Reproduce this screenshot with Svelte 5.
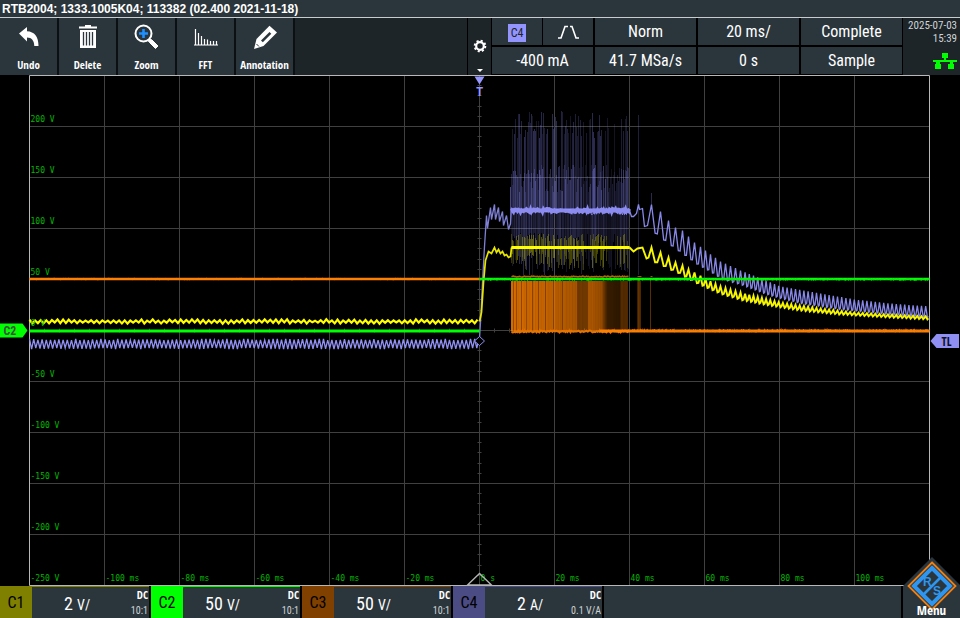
<script lang="ts">
	type Point = [number, number];

	type Channel = {
		id: string;
		scale: string;
		unit: string;
		coupling: string;
		probe: string;
	};

	const tools = ['Undo', 'Delete', 'Zoom', 'FFT', 'Annotation'];

	const channels: Channel[] = [
		{ id: 'C1', scale: '2', unit: 'V/', coupling: 'DC', probe: '10:1' },
		{ id: 'C2', scale: '50', unit: 'V/', coupling: 'DC', probe: '10:1' },
		{ id: 'C3', scale: '50', unit: 'V/', coupling: 'DC', probe: '10:1' },
		{ id: 'C4', scale: '2', unit: 'A/', coupling: 'DC', probe: '0.1 V/A' }
	];

	// The graticule is 12 x 10 divisions with the trigger point at the origin.
	const DIV_X = 75;
	const DIV_Y = 51;
	const LEFT = -450;
	const RIGHT = 450;
	const TOP = -255;
	const BOTTOM = 255;

	const columns = [-5, -4, -3, -2, -1, 1, 2, 3, 4, 5];
	const rows = [-4, -3, -2, -1, 0, 1, 2, 3, 4];
	const voltLabels = [200, 150, 100, 50, 0, -50, -100, -150, -200, -250];
	const timeLabels = [-100, -80, -60, -40, -20, 0, 20, 40, 60, 80, 100];

	const ticksX = Array.from({ length: 59 }, (_, i) => LEFT + (i + 1) * 15);
	const ticksY = Array.from({ length: 49 }, (_, i) => Math.round(TOP + (i + 1) * 10.2));

	let seed = 7;
	function random(): number {
		seed = (seed * 16807) % 2147483647;
		return seed / 2147483647;
	}

	function toPath(points: Point[]): string {
		return 'M' + points.map(([x, y]) => `${x.toFixed(1)} ${y.toFixed(1)}`).join('L');
	}

	function lerp(table: Point[], x: number): number {
		for (let i = 1; i < table.length; i++) {
			const [x0, y0] = table[i - 1];
			const [x1, y1] = table[i];
			if (x <= x1) return y0 + ((y1 - y0) * (x - x0)) / (x1 - x0);
		}
		return table[table.length - 1][1];
	}

	function ripple(from: number, to: number, period: number, low: number, high: number): Point[] {
		const points: Point[] = [];
		let up = true;
		for (let x = from; x <= to; x += period / 2) {
			points.push([x, (up ? high : low) + random() * 1.4 - 0.7]);
			up = !up;
		}
		return points;
	}

	function noise(from: number, to: number, y: number, spread: number): Point[] {
		const points: Point[] = [];
		for (let x = from; x <= to; x += 1) {
			points.push([x, y + (random() - 0.5) * spread]);
		}
		return points;
	}

	const peakTimes = [172, 181, 189, 196, 203, 209, 215, 221, 226, 231, 236, 241, 246, 251, 256, 261];
	for (let t = 265.6; t < RIGHT + 4; t += 4.2) peakTimes.push(t);

	const blueHigh: Point[] = [
		[172, -126], [181, -119], [189, -110], [196, -103], [203, -100], [209, -94],
		[215, -88], [226, -80], [241, -69], [261, -60], [301, -44], [341, -37],
		[375, -31], [410, -27], [450, -24]
	];
	const blueLow: Point[] = [
		[176, -97], [185, -90], [193, -84], [200, -79], [207, -74], [218, -66],
		[229, -60], [243, -51], [264, -45], [290, -35], [321, -27], [360, -21],
		[410, -16], [450, -13]
	];
	const yellowHigh: Point[] = [
		[172, -83], [181, -78], [189, -73], [196, -68], [203, -65], [209, -61],
		[215, -58], [226, -52], [241, -44], [261, -38], [301, -28], [341, -22],
		[375, -18], [410, -16], [450, -14]
	];
	const yellowLow: Point[] = [
		[176, -68], [185, -64], [193, -60], [200, -57], [207, -53], [218, -47],
		[229, -42], [243, -36], [264, -30], [290, -25], [321, -20], [360, -16],
		[410, -13], [450, -11]
	];

	function decay(high: Point[], low: Point[]): Point[] {
		const points: Point[] = [];
		for (let i = 0; i < peakTimes.length - 1; i++) {
			const x = peakTimes[i];
			const gap = peakTimes[i + 1] - x;
			points.push([x, lerp(high, x)]);
			points.push([x + gap * 0.4, lerp(low, x + gap * 0.4)]);
			points.push([x + gap * 0.65, lerp(low, x + gap * 0.65) - 1]);
		}
		return points.filter(([x]) => x <= RIGHT);
	}

	const blueBefore = toPath(ripple(LEFT, 0, 4.2, 18, 9));
	const blueRise = toPath([
		[0, 8], [1, -8], [3, -48], [5, -84], [7, -115], [8, -102], [11, -123], [12, -111],
		[15, -126], [16, -111], [19, -123], [20, -109], [23, -119], [24, -105], [27, -115],
		[29, -101], [31, -107], [32, -123]
	]);
	const blueFall = toPath([
		[150, -120], [152, -114], [154, -114], [157, -117], [159, -126], [160, -121], [163, -122],
		[165, -104], [168, -105], ...decay(blueHigh, blueLow)
	]);
	const blueTop = toPath(noise(32, 150, -120, 4));

	const yellowBefore = toPath(ripple(LEFT, 0, 5.6, -7.5, -10.5));
	const yellowRise = toPath([
		[0, -9], [2, -18], [4, -48], [6, -70], [9, -79], [12, -77], [15, -83], [17, -78],
		[19, -81], [21, -77], [23, -79], [25, -75], [27, -76], [29, -73], [31, -74], [32, -83]
	]);
	const yellowTop = toPath(noise(32, 150, -83, 1));
	const yellowFall = toPath([
		[150, -83], [154, -79], [158, -82], [163, -83], [167, -72], [169, -73],
		...decay(yellowHigh, yellowLow)
	]);

	// Persistence density of the switching spikes along the burst.
	const density: Point[] = [
		[32, 0.8], [38, 0.7], [46, 0.8], [62, 0.9], [75, 0.7], [92, 0.7], [98, 0.5], [108, 0.25],
		[114, 0.8], [126, 0.75], [129, 0.2], [138, 0.25], [142, 0.6], [150, 0.5]
	];

	type Bar = { x: number; y: number; height: number; opacity: number };

	const blueBars: Bar[] = [];
	const yellowBars: Bar[] = [];
	const orangeBars: Bar[] = [];

	for (let x = 32; x < 150; x++) {
		const d = lerp(density, x);
		if (random() < d * 0.95) {
			const tall = -220 + random() * 28;
			blueBars.push({ x, y: tall, height: -122 - tall, opacity: 0.12 + random() * 0.26 * d });
		}
		const mid = -138 - random() * 28;
		blueBars.push({ x, y: mid, height: -122 - mid, opacity: 0.1 + random() * 0.36 * d });
		blueBars.push({
			x,
			y: -118,
			height: 20 + random() * 44,
			opacity: 0.1 + random() * 0.3 * d
		});
		if (random() < d * 0.9) {
			yellowBars.push({
				x,
				y: -97 + random() * 8,
				height: 14 + random() * 18,
				opacity: 0.2 + random() * 0.26 * d
			});
		}
	}
	blueBars.push({ x: 31, y: -144, height: 38, opacity: 0.5 });
	blueBars.push({ x: 159, y: -216, height: 160, opacity: 0.22 });
	blueBars.push({ x: 172, y: -138, height: 14, opacity: 0.3 });

	const orangeLevel: Point[] = [
		[32, 0.85], [60, 0.8], [80, 0.72], [97, 0.66], [98, 0.45], [108, 0.45], [109, 0.7],
		[122, 0.6], [128, 0.22], [140, 0.18], [142, 0.34], [149, 0.34]
	];
	const gaps = [34, 37, 42, 47, 53, 59, 66, 74, 83];
	for (let x = 32; x < 149; x++) {
		const dim = gaps.includes(x) ? 0.7 : 1;
		orangeBars.push({
			x,
			y: -50,
			height: 50,
			opacity: lerp(orangeLevel, x) * dim * (0.92 + random() * 0.08)
		});
	}
	orangeBars.push({ x: 158, y: -50, height: 50, opacity: 0.25 });
	orangeBars.push({ x: 159, y: -50, height: 50, opacity: 0.4 });
	orangeBars.push({ x: 160, y: -50, height: 50, opacity: 0.35 });
	orangeBars.push({ x: 161, y: -50, height: 50, opacity: 0.3 });
	orangeBars.push({ x: 171, y: -50, height: 50, opacity: 0.35 });
</script>

<main class="scope">
	<header class="title">RTB2004; 1333.1005K04; 113382 (02.400 2021-11-18)</header>

	<nav class="toolbar" aria-label="Toolbar">
		{#each tools as tool (tool)}
			<button class="tool" type="button">
				<svg class="tool-icon" viewBox="0 0 28 28" aria-hidden="true">
					{#if tool === 'Undo'}
						<path d="M4 10.5 12 4v4.2c7.500.3 11.500 5.500 11.500 14.800h-4.200c-.2-5.800-2.500-8.400-7.300-8.600v4z" fill="#fff" />
					{:else if tool === 'Delete'}
						<path d="M5 3.500h6V2h6v1.500h6v2H5z" fill="#fff" />
						<path d="M6 7h16v18H6z" fill="#fff" />
						<path d="M9.500 9v13.500M12.500 9v13.500M15.500 9v13.500M18.500 9v13.500" stroke="#2b363c" stroke-width="1.300" />
					{:else if tool === 'Zoom'}
						<circle cx="10.500" cy="10.500" r="8" fill="none" stroke="#fff" stroke-width="2" />
						<path d="m16.500 16 2.500 1 6 6-2.500 2.500-6-6-1.500-2z" fill="#fff" stroke="#fff" />
						<path d="M10.500 6v9M6 10.500h9" stroke="#1e90ff" stroke-width="2.600" />
					{:else if tool === 'FFT'}
						<path
							d="M3.500 6v16M6.500 10v12M9.500 13v9M12.500 16v6M15.500 16.500v5.500M18.500 18v4M21.500 18v4M24.500 18v4M2 22h24"
							stroke="#fff"
							stroke-width="1.200"
						/>
					{:else}
						<path d="m3 26 2.500-10L18.500 2.800 26 9.500 12.500 23z" fill="#fff" />
						<path d="m10 17.500 8.500-8.500 1.800 1.700-8.500 8.500z" fill="#2b363c" />
						<path d="m5.500 21 2.500 2.500" stroke="#2b363c" />
					{/if}
				</svg>
				<span>{tool}</span>
			</button>
		{/each}
		<div class="spacer"></div>
		<button class="settings" type="button" aria-label="Trigger settings">
			<svg class="gear" viewBox="0 0 14 14" aria-hidden="true">
				<circle cx="7" cy="7" r="5.300" fill="none" stroke="#fff" stroke-width="2" stroke-dasharray="2.080" />
				<circle cx="7" cy="7" r="3.800" fill="none" stroke="#fff" stroke-width="2.200" />
			</svg>
			<svg class="caret" viewBox="0 0 6 3" aria-hidden="true">
				<path d="M0 0h6L3 3z" fill="#fff" />
			</svg>
		</button>
		<div class="params">
			<div class="split">
				<button type="button"><span class="source">C4</span></button>
				<button type="button" aria-label="Trigger slope">
					<svg class="slope" viewBox="0 0 22 14" aria-hidden="true">
						<path d="M1 13h3L8 1.500h3M13 1.500h2L19 13h3" fill="none" stroke="#fff" stroke-width="1.600" />
					</svg>
				</button>
			</div>
			<button type="button">Norm</button>
			<button type="button">20 ms/</button>
			<button type="button">Complete</button>
			<button type="button">-400 mA</button>
			<button type="button">41.7 MSa/s</button>
			<button type="button">0 s</button>
			<button type="button">Sample</button>
		</div>
		<div class="status">
			<time datetime="2025-07-03T15:39">
				<span>2025-07-03</span>
				<span>15:39</span>
			</time>
			<svg class="lan" viewBox="0 0 24 16" aria-label="LAN connected">
				<path d="M9 0h6v5h-2v2h11v2h-4v2h1v5h-6v-5h2V9H7v2h1v5H2v-5h1V9H0V7h11V5H9z" fill="#00ff00" />
			</svg>
		</div>
	</nav>

	<svg class="graticule" viewBox="-479.5 -255.5 960 511" role="img" aria-label="Waveform display">
		<g class="grid">
			{#each columns as c (c)}
				<path d="M{c * DIV_X} {TOP}V{BOTTOM}" />
			{/each}
			{#each rows as r (r)}
				<path d="M{LEFT} {r * DIV_Y}H{RIGHT}" />
			{/each}
			<path d="M0 {TOP}V{BOTTOM}" />
			{#each ticksX as x (x)}
				<path d="M{x} -2V2" />
			{/each}
			{#each ticksY as y (y)}
				<path d="M-2 {y}H2" />
			{/each}
		</g>
		<path class="frame" d="M{LEFT} {TOP}H{RIGHT}V{BOTTOM}H{LEFT}z" />

		<g class="burst">
			{#each blueBars as bar}
				<rect x={bar.x - 0.5} y={bar.y} width="1" height={bar.height} fill="#8c8cff" opacity={bar.opacity} />
			{/each}
			{#each yellowBars as bar}
				<rect x={bar.x - 0.5} y={bar.y} width="1" height={bar.height} fill="#d8d800" opacity={bar.opacity} />
			{/each}
			{#each orangeBars as bar}
				<rect x={bar.x - 0.5} y={bar.y} width="1" height={bar.height} fill="#ff8000" opacity={bar.opacity} />
			{/each}
		</g>

		<g fill="none">
			<path d={toPath(noise(32, 149, -54, 1))} stroke="#c06000" stroke-width="1.500" />
			<path d="M158 -54h4M171 -54h2" stroke="#a85400" />
			<path d={blueBefore} stroke="#9090f4" stroke-width="1.300" />
			<path d={blueRise} stroke="#8080d8" stroke-width="1.300" />
			<path d={blueFall} stroke="#8888ea" stroke-width="1.300" />
			<path d="M32 -120H150" stroke="#9494ff" stroke-width="4" />
			<path d={blueTop} stroke="#8c8cf0" stroke-width="3" />
			<path d={toPath(noise(100, 150, -119, 7))} stroke="#8c8cf0" />
			<path d={yellowBefore} stroke="#ffff00" stroke-width="2.200" />
			<path d={yellowRise} stroke="#e6e600" stroke-width="1.700" />
			<path d="M32 -83H150" stroke="#ffff00" stroke-width="3" />
			<path d={yellowTop} stroke="#ffff00" stroke-width="2" />
			<path d={yellowFall} stroke="#f6f600" stroke-width="1.900" />
			<path d="M{LEFT} -51.500H0" stroke="#ff8000" stroke-width="2.500" />
			<path d={toPath(noise(LEFT, 0, -51.5, 1.5))} stroke="#ff8000" />
			<path d={toPath(noise(32, 149, 1, 2))} stroke="#e87400" stroke-width="2" />
			<path d="M120 0.500H{RIGHT}" stroke="#ff8000" stroke-width="3" />
			<path d={toPath(noise(149, RIGHT, 0, 3))} stroke="#f07800" />
			<path d="M{LEFT} 0.500H0" stroke="#00ff00" stroke-width="3" />
			<path d="M0 -51.500H{RIGHT}" stroke="#00ff00" stroke-width="2.500" />
			<path d={toPath(noise(0, RIGHT, -51, 2))} stroke="#00e800" />
		</g>

		<g class="labels">
			{#each voltLabels as v (v)}
				<text x={LEFT + 1} y={-v * 1.02 - 5}>{v} V</text>
			{/each}
			{#each timeLabels as t (t)}
				<text x={t * 3.75 + 1} y={BOTTOM - 5}>{t} {t === 0 ? 's' : 'ms'}</text>
			{/each}
		</g>

		<path d="M-5 -254H5L0 -246z" fill="#9696ff" />
		<text class="trigger-mark" x="0" y="-235">T</text>
		<path d="M0 6 5 10.500 0 15-5 10.500z" fill="#000" stroke="#8c8cf0" />
		<path d="M0 243-12 254.500H12z" fill="none" stroke="#b4b4b4" stroke-width="1.400" />

		<path d="M-479.500 -7H-457L-452 0-457 7H-479.500z" fill="#00ff00" />
		<text class="zero-mark" x="-476" y="4">C2</text>
		<path d="M451 10.500 457 3.500H479.500V17.500H457z" fill="#9090f4" />
		<text class="level-mark" x="467" y="15">TL</text>
	</svg>

	<footer class="channels">
		{#each channels as channel (channel.id)}
			<button class="channel" type="button" data-channel={channel.id}>
				<span class="channel-id">{channel.id}</span>
				<span class="channel-body">
					<span class="channel-scale">{channel.scale} <small>{channel.unit}</small></span>
					<span class="channel-meta">
						<b>{channel.coupling}</b>
						<span>{channel.probe}</span>
					</span>
				</span>
			</button>
		{/each}
		<div class="spacer"></div>
		<button class="menu" type="button">
			<svg class="logo" viewBox="0 0 58 58" aria-hidden="true">
				<path d="M29 0 58 29 29 58 0 29z" fill="#2b363c" />
				<path d="M29 5.500 52.500 29 29 52.500 5.500 29z" fill="none" stroke="#f08010" stroke-width="1.800" />
				<path d="M29 11 47 29 29 47 11 29z" fill="#2b363c" stroke="#2e96f0" stroke-width="4" />
				<path d="M21 37 37 21" stroke="#2e96f0" stroke-width="2.500" />
				<text x="20" y="29">R</text>
				<text x="30" y="38">S</text>
			</svg>
			<span>Menu</span>
		</button>
	</footer>
</main>

<style>
	:global(body) {
		margin: 0;
		background: #000;
	}

	.scope {
		display: flex;
		flex-direction: column;
		background: #000;
		color: #fff;
		font-family: "Roboto Condensed", Roboto, sans-serif;
	}

	button {
		margin: 0;
		border: 0;
		padding: 0;
		background: #2b363c;
		color: inherit;
		font: inherit;
		cursor: pointer;
	}

	.title {
		height: 17px;
		border-bottom: 1px solid #c8cccc;
		padding-left: 2px;
		background: #2b363c;
		font: bold 12px/18px "Liberation Sans", Arial, sans-serif;
		white-space: nowrap;
	}

	.toolbar {
		display: flex;
		height: 57px;
	}

	.tool {
		display: flex;
		flex-direction: column;
		align-items: center;
		justify-content: space-between;
		width: 59px;
		border-right: 2px solid #0c1012;
		padding: 5px 0 2px;
		font: bold 11px/16px "Open Sans Condensed", "Roboto Condensed", sans-serif;
	}

	.tool-icon {
		width: 28px;
		height: 28px;
	}

	.spacer {
		flex: 1;
		background: #1d2529;
	}

	.settings {
		display: flex;
		flex-direction: column;
		align-items: center;
		justify-content: flex-end;
		gap: 16px;
		width: 24px;
		border-left: 1px solid #000;
		padding-bottom: 3px;
		background: #1d2529;
	}

	.gear {
		width: 14px;
		height: 14px;
	}

	.caret {
		width: 6px;
		height: 3px;
	}

	.params {
		display: grid;
		grid-template-columns: repeat(4, 101px);
		grid-template-rows: 1fr 1fr;
		gap: 2px;
		padding: 0 1px 1px;
		background: #000;
		font-size: 16px;
		line-height: 20px;
	}

	.split {
		display: grid;
		grid-template-columns: 1fr 1fr;
		gap: 1px;
	}

	.source {
		display: inline-block;
		width: 18px;
		background: #9494ff;
		color: #1d2529;
		font-size: 12px;
		line-height: 18px;
	}

	.slope {
		width: 22px;
		height: 14px;
		vertical-align: middle;
	}

	.status {
		display: flex;
		flex-direction: column;
		align-items: flex-end;
		justify-content: space-between;
		width: 54px;
		padding: 1px 3px 6px 0;
		background: #1d2529;
		color: #d0d4d6;
		font-size: 11px;
		line-height: 13px;
		text-align: right;
		white-space: nowrap;
	}

	.status span {
		display: block;
	}

	.lan {
		width: 24px;
		height: 16px;
	}

	.graticule {
		display: block;
		width: 100%;
		background: #000;
	}

	.grid {
		fill: none;
		stroke: #404040;
	}

	.frame {
		fill: none;
		stroke: #b8b8b8;
	}

	.burst {
		shape-rendering: crispEdges;
	}

	.labels {
		fill: #00b800;
		font: 8px "DejaVu Sans Mono", monospace;
	}

	.trigger-mark {
		fill: #9696ff;
		font: bold 12px "Liberation Mono", monospace;
		text-anchor: middle;
	}

	.zero-mark {
		fill: #405040;
		font: bold 12px "Roboto Condensed", Roboto, sans-serif;
	}

	.level-mark {
		fill: #101020;
		font: bold 12px "Open Sans Condensed", sans-serif;
		text-anchor: middle;
	}

	.channels {
		display: flex;
		height: 32px;
	}

	.channel {
		display: flex;
		width: 149px;
		margin-right: 2px;
		border-top: 1px solid var(--tint);
		text-align: left;
	}

	.channel[data-channel="C1"] {
		--tint: #808000;
	}

	.channel[data-channel="C2"] {
		--tint: #00ff00;
	}

	.channel[data-channel="C3"] {
		--tint: #804000;
	}

	.channel[data-channel="C4"] {
		--tint: #4c4c84;
	}

	.channel-id {
		width: 32px;
		background: var(--tint);
		color: #000;
		font-size: 16px;
		line-height: 31px;
		text-align: center;
	}

	.channel-body {
		display: flex;
		flex: 1;
		padding-right: 1px;
	}

	.channel-scale {
		flex: 1;
		padding-left: 32px;
		font-size: 18px;
		line-height: 34px;
	}

	.channel[data-channel="C2"] .channel-scale,
	.channel[data-channel="C3"] .channel-scale {
		padding-left: 22px;
	}

	.channel-scale small {
		font-size: 14px;
	}

	.channel-meta {
		display: flex;
		flex-direction: column;
		align-items: flex-end;
		color: #d0d4d6;
		font-size: 10px;
		line-height: 16px;
	}

	.channel-meta b {
		color: #fff;
		font: bold 11px/16px "Open Sans Condensed", "Roboto Condensed", sans-serif;
	}

	.channels .spacer {
		background: #2b363c;
	}

	.menu {
		position: relative;
		width: 57px;
		margin-left: 2px;
		font: bold 13px/16px "Open Sans Condensed", sans-serif;
	}

	.menu span {
		display: block;
		position: relative;
		padding-top: 16px;
	}

	.logo {
		position: absolute;
		bottom: 3px;
		left: 0;
		width: 58px;
		height: 58px;
	}

	.logo text {
		fill: #2e96f0;
		font: bold 12px "Liberation Sans", sans-serif;
	}
</style>
